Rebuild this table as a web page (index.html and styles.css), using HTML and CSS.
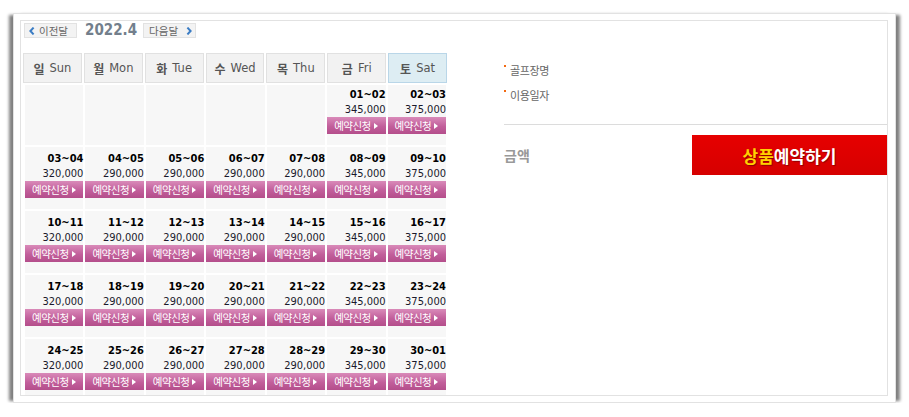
FILE: index.html
```html
<!DOCTYPE html>
<html lang="ko">
<head>
<meta charset="utf-8">
<title>예약</title>
<link rel="stylesheet" href="styles.css">
</head>
<body>
<div class="page">
  <div class="outer">
    <div class="inner">
      <div class="cal">
        <div class="nav">
          <span class="navbtn prev"><svg class="chev" width="6" height="8" viewBox="0 0 6 8"><polyline points="4.6,0.6 1.4,4 4.6,7.4" fill="none" stroke="#3a7cc4" stroke-width="2"/></svg>이전달</span>
          <span class="ym">2022.4</span>
          <span class="navbtn next">다음달<svg class="chev" width="6" height="8" viewBox="0 0 6 8"><polyline points="1.4,0.6 4.6,4 1.4,7.4" fill="none" stroke="#3a7cc4" stroke-width="2"/></svg></span>
        </div>
        <div class="dow">
          <div class="dh"><b>일</b>Sun</div>
          <div class="dh"><b>월</b>Mon</div>
          <div class="dh"><b>화</b>Tue</div>
          <div class="dh"><b>수</b>Wed</div>
          <div class="dh"><b>목</b>Thu</div>
          <div class="dh"><b>금</b>Fri</div>
          <div class="dh sat"><b>토</b>Sat</div>
        </div>
        <div class="days">
          <div class="day"></div><div class="day"></div><div class="day"></div><div class="day"></div><div class="day"></div>
          <div class="day"><span class="d">01~02</span><span class="p">345,000</span><span class="rsv">예약신청<i class="tri"></i></span></div>
          <div class="day"><span class="d">02~03</span><span class="p">375,000</span><span class="rsv">예약신청<i class="tri"></i></span></div>

          <div class="day"><span class="d">03~04</span><span class="p">320,000</span><span class="rsv">예약신청<i class="tri"></i></span></div>
          <div class="day"><span class="d">04~05</span><span class="p">290,000</span><span class="rsv">예약신청<i class="tri"></i></span></div>
          <div class="day"><span class="d">05~06</span><span class="p">290,000</span><span class="rsv">예약신청<i class="tri"></i></span></div>
          <div class="day"><span class="d">06~07</span><span class="p">290,000</span><span class="rsv">예약신청<i class="tri"></i></span></div>
          <div class="day"><span class="d">07~08</span><span class="p">290,000</span><span class="rsv">예약신청<i class="tri"></i></span></div>
          <div class="day"><span class="d">08~09</span><span class="p">345,000</span><span class="rsv">예약신청<i class="tri"></i></span></div>
          <div class="day"><span class="d">09~10</span><span class="p">375,000</span><span class="rsv">예약신청<i class="tri"></i></span></div>

          <div class="day"><span class="d">10~11</span><span class="p">320,000</span><span class="rsv">예약신청<i class="tri"></i></span></div>
          <div class="day"><span class="d">11~12</span><span class="p">290,000</span><span class="rsv">예약신청<i class="tri"></i></span></div>
          <div class="day"><span class="d">12~13</span><span class="p">290,000</span><span class="rsv">예약신청<i class="tri"></i></span></div>
          <div class="day"><span class="d">13~14</span><span class="p">290,000</span><span class="rsv">예약신청<i class="tri"></i></span></div>
          <div class="day"><span class="d">14~15</span><span class="p">290,000</span><span class="rsv">예약신청<i class="tri"></i></span></div>
          <div class="day"><span class="d">15~16</span><span class="p">345,000</span><span class="rsv">예약신청<i class="tri"></i></span></div>
          <div class="day"><span class="d">16~17</span><span class="p">375,000</span><span class="rsv">예약신청<i class="tri"></i></span></div>

          <div class="day"><span class="d">17~18</span><span class="p">320,000</span><span class="rsv">예약신청<i class="tri"></i></span></div>
          <div class="day"><span class="d">18~19</span><span class="p">290,000</span><span class="rsv">예약신청<i class="tri"></i></span></div>
          <div class="day"><span class="d">19~20</span><span class="p">290,000</span><span class="rsv">예약신청<i class="tri"></i></span></div>
          <div class="day"><span class="d">20~21</span><span class="p">290,000</span><span class="rsv">예약신청<i class="tri"></i></span></div>
          <div class="day"><span class="d">21~22</span><span class="p">290,000</span><span class="rsv">예약신청<i class="tri"></i></span></div>
          <div class="day"><span class="d">22~23</span><span class="p">345,000</span><span class="rsv">예약신청<i class="tri"></i></span></div>
          <div class="day"><span class="d">23~24</span><span class="p">375,000</span><span class="rsv">예약신청<i class="tri"></i></span></div>

          <div class="day"><span class="d">24~25</span><span class="p">320,000</span><span class="rsv">예약신청<i class="tri"></i></span></div>
          <div class="day"><span class="d">25~26</span><span class="p">290,000</span><span class="rsv">예약신청<i class="tri"></i></span></div>
          <div class="day"><span class="d">26~27</span><span class="p">290,000</span><span class="rsv">예약신청<i class="tri"></i></span></div>
          <div class="day"><span class="d">27~28</span><span class="p">290,000</span><span class="rsv">예약신청<i class="tri"></i></span></div>
          <div class="day"><span class="d">28~29</span><span class="p">290,000</span><span class="rsv">예약신청<i class="tri"></i></span></div>
          <div class="day"><span class="d">29~30</span><span class="p">345,000</span><span class="rsv">예약신청<i class="tri"></i></span></div>
          <div class="day"><span class="d">30~01</span><span class="p">375,000</span><span class="rsv">예약신청<i class="tri"></i></span></div>
        </div>
      </div>
      <div class="info">
        <ul class="list">
          <li><span class="bul"></span>골프장명</li>
          <li><span class="bul"></span>이용일자</li>
        </ul>
        <div class="sep"></div>
        <div class="pay">
          <span class="amt">금액</span>
          <span class="go"><em>상품</em>예약하기</span>
        </div>
      </div>
    </div>
  </div>
</div>
</body>
</html>
```
FILE: styles.css
```css
* { box-sizing: border-box; margin: 0; padding: 0; }
html, body { background: #fff; }
body { font-family: "DejaVu Sans", "Noto Sans CJK KR", sans-serif; }

.page { padding: 13px 0 0 13px; }

.outer {
  width: 883px;
  height: 390px;
  border: 1px solid #e2e2e2;
  padding: 6px 7px 6px 6px;
  background: #fff;
  box-shadow: -6px 0 3px -2px #808080, 6px 0 3px -2px #808080;
}

.inner {
  display: flex;
  height: 376px;
  border: 1px solid #e2e2e2;
  overflow: hidden;
}

.cal { width: 428px; flex: none; }

.nav {
  display: flex;
  align-items: center;
  height: 15px;
  margin: 2px 0 0 3px;
}

.navbtn {
  display: inline-flex;
  align-items: center;
  width: 53px;
  height: 15px;
  background: #f3f3f3;
  border: 1px solid #e2e2e2;
  font-family: "Noto Sans CJK KR", sans-serif;
  font-size: 10.5px;
  line-height: 13px;
  color: #666;
}
.prev { padding-left: 4px; gap: 4px; }
.next { padding-left: 5px; gap: 8px; }
.chev { display: block; flex: none; }

.ym {
  margin: 0 6px 0 8px;
  font-family: "DejaVu Sans Condensed", "DejaVu Sans", sans-serif;
  font-weight: bold;
  font-size: 15px;
  line-height: 15px;
  color: #737f8c;
}

.dow {
  display: grid;
  grid-template-columns: repeat(7, 1fr);
  gap: 2px;
  width: 424px;
  margin: 15px 0 0 2px;
}
.dh {
  height: 30px;
  border: 1px solid #e1e1e1;
  background: #f2f2f2;
  display: flex;
  align-items: center;
  justify-content: center;
  font-size: 11.5px;
  color: #555;
}
.dh b {
  font-family: "Noto Sans CJK KR", sans-serif;
  font-weight: 700;
  font-size: 12px;
  margin-right: 5px;
}
.dh.sat { background: #ddedf3; border-color: #b9d6e8; }

.days {
  display: grid;
  grid-template-columns: repeat(7, 1fr);
  grid-template-rows: 60px repeat(4, 62px);
  gap: 2px;
  width: 421px;
  margin: 2px 0 0 4px;
}
.day {
  background: #f7f7f7;
  display: flex;
  flex-direction: column;
  justify-content: flex-end;
  padding-bottom: 11px;
  text-align: right;
}
.day .d {
  font-family: "DejaVu Sans Condensed", "DejaVu Sans", sans-serif;
  font-weight: bold;
  font-size: 11px;
  line-height: 15px;
  color: #000;
}
.day .p {
  font-family: "DejaVu Sans Condensed", "DejaVu Sans", sans-serif;
  font-size: 11px;
  line-height: 15px;
  color: #1a1a2c;
}
.rsv {
  height: 17px;
  display: flex;
  align-items: center;
  padding-left: 7px;
  background: linear-gradient(#d98ab9, #c25f9b 55%, #b44e8b);
  color: #fff;
  font-family: "Noto Sans CJK KR", sans-serif;
  font-size: 10.5px;
  letter-spacing: -0.5px;
}
.tri {
  width: 0;
  height: 0;
  margin-left: 3px;
  border-left: 4px solid #fff;
  border-top: 3px solid transparent;
  border-bottom: 3px solid transparent;
}

.info { flex: 1; margin-left: 55px; padding-top: 37px; }
.list { list-style: none; }
.list li {
  display: flex;
  align-items: flex-start;
  height: 25px;
  font-family: "Noto Sans CJK KR", sans-serif;
  font-size: 11px;
  line-height: 25px;
  letter-spacing: -0.4px;
  color: #666;
}
.bul {
  flex: none;
  width: 2px;
  height: 2px;
  background: #f26a12;
  margin: 7px 4px 0 0;
}
.sep { height: 1px; background: #dcdcdc; margin-top: 16px; }

.pay {
  display: flex;
  justify-content: space-between;
  align-items: center;
  margin-top: 10px;
}
.amt {
  font-family: "Noto Sans CJK KR", sans-serif;
  font-weight: 700;
  font-size: 14px;
  color: #999;
}
.go {
  width: 195px;
  height: 40px;
  display: flex;
  align-items: center;
  justify-content: center;
  background: linear-gradient(#e60000, #d60000);
  font-family: "Noto Sans CJK KR", sans-serif;
  font-weight: 700;
  font-size: 17px;
  color: #fff;
  text-shadow: 1px 1px 1px rgba(90, 0, 0, 0.6);
}
.go em { font-style: normal; color: #ffd200; }
```
